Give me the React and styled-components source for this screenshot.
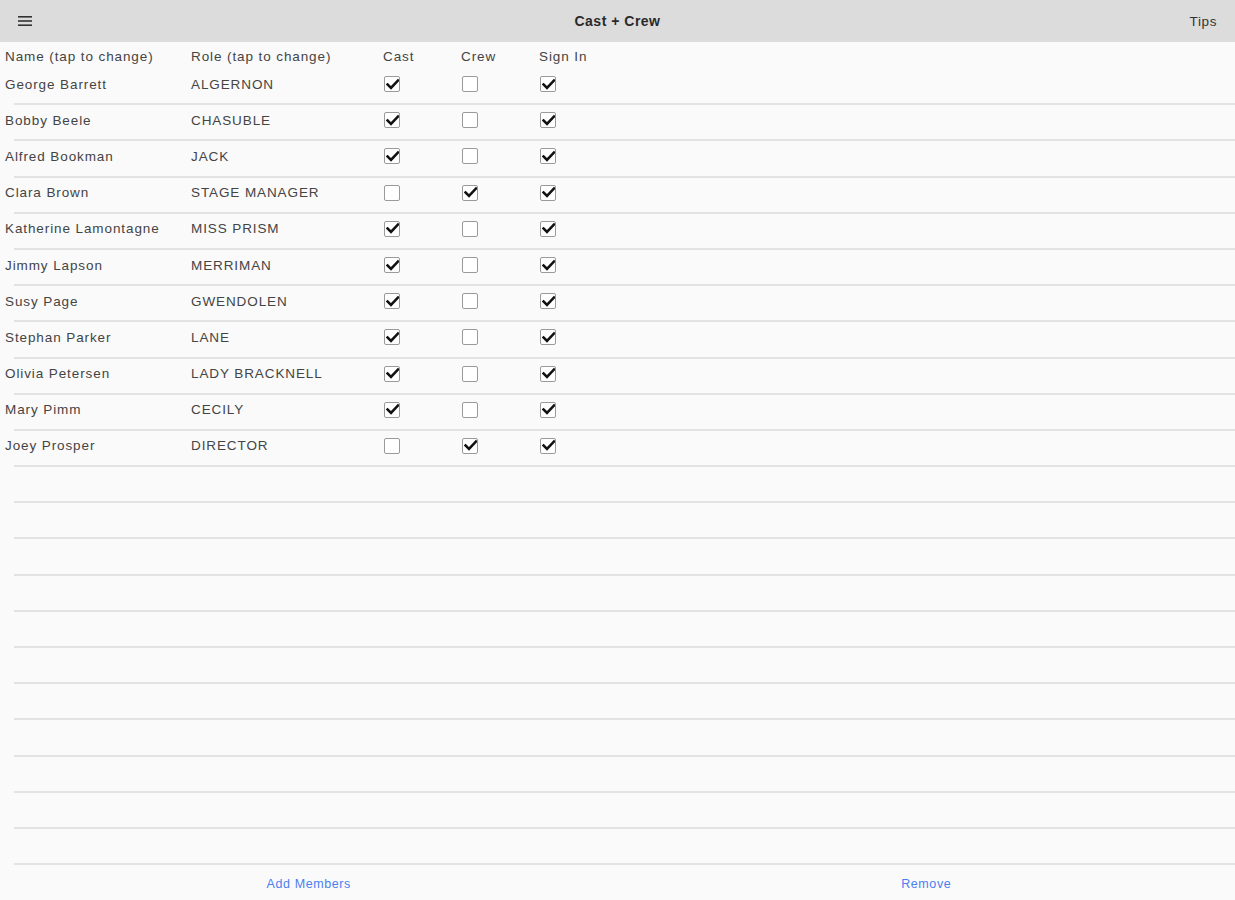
import styled, { createGlobalStyle } from 'styled-components';

const GlobalStyle = createGlobalStyle`
	html, body {
		margin: 0;
		padding: 0;
		background: #fafafa;
	}
	body {
		font-family: 'Liberation Sans', Arial, sans-serif;
		color: #404040;
	}
`;

const members = [
	{ name: 'George Barrett', role: 'ALGERNON', cast: true, crew: false, signIn: true },
	{ name: 'Bobby Beele', role: 'CHASUBLE', cast: true, crew: false, signIn: true },
	{ name: 'Alfred Bookman', role: 'JACK', cast: true, crew: false, signIn: true },
	{ name: 'Clara Brown', role: 'STAGE MANAGER', cast: false, crew: true, signIn: true },
	{ name: 'Katherine Lamontagne', role: 'MISS PRISM', cast: true, crew: false, signIn: true },
	{ name: 'Jimmy Lapson', role: 'MERRIMAN', cast: true, crew: false, signIn: true },
	{ name: 'Susy Page', role: 'GWENDOLEN', cast: true, crew: false, signIn: true },
	{ name: 'Stephan Parker', role: 'LANE', cast: true, crew: false, signIn: true },
	{ name: 'Olivia Petersen', role: 'LADY BRACKNELL', cast: true, crew: false, signIn: true },
	{ name: 'Mary Pimm', role: 'CECILY', cast: true, crew: false, signIn: true },
	{ name: 'Joey Prosper', role: 'DIRECTOR', cast: false, crew: true, signIn: true },
];

const EMPTY_ROWS = 11;

const Page = styled.div`
	display: flex;
	flex-direction: column;
	height: 100vh;
	width: 1235px;
	background: #fafafa;
`;

const NavBar = styled.header`
	height: 42px;
	flex: 0 0 42px;
	display: grid;
	grid-template-columns: 1fr auto 1fr;
	align-items: center;
	background: #dcdcdc;
	padding: 0 18px;
	box-sizing: border-box;
`;

const MenuButton = styled.div`
	display: flex;
	align-items: center;
	color: #333;
`;

const Title = styled.div`
	font-size: 14px;
	font-weight: 700;
	letter-spacing: 0.5px;
	color: #2a2a2a;
`;

const NavAction = styled.div`
	justify-self: end;
	font-size: 13.5px;
	letter-spacing: 0.6px;
	color: #333;
`;

const Table = styled.div`
	display: flex;
	flex-direction: column;
`;

const cols = '186px 192px 78px 78px 1fr';

const HeaderRow = styled.div`
	display: grid;
	grid-template-columns: ${cols};
	align-items: center;
	height: 27px;
	padding-left: 5px;
	padding-top: 1px;
	box-sizing: border-box;
	font-size: 13.5px;
	letter-spacing: 0.9px;
	color: #444;
`;

const Row = styled.div`
	position: relative;
	display: grid;
	grid-template-columns: ${cols};
	align-items: center;
	height: 36.2px;
	padding-left: 5px;
	padding-bottom: 6px;
	box-sizing: border-box;
	font-size: 13.5px;
	letter-spacing: 0.9px;
	color: #444;

	&::after {
		content: '';
		position: absolute;
		left: 14px;
		right: 0;
		bottom: 0;
		height: 2px;
		background: #e3e3e3;
	}
`;

const Cell = styled.div`
	display: flex;
	align-items: center;
	white-space: nowrap;
`;

const Box = styled.span`
	display: inline-flex;
	align-items: center;
	justify-content: center;
	width: 16px;
	height: 16px;
	box-sizing: border-box;
	border: 1.5px solid #9a9a9a;
	border-radius: 2px;
	background: #fff;
	margin-left: 1px;
`;

const Footer = styled.div`
	flex: 1;
	display: grid;
	grid-template-columns: 1fr 1fr;
	align-items: center;
	padding-top: 3px;
`;

const FooterLink = styled.div`
	text-align: center;
	font-size: 12.5px;
	letter-spacing: 0.6px;
	color: #4a7ff0;
`;

const Checkbox = ({ checked }) => (
	<Box>
		{checked && (
			<svg width='13' height='13' viewBox='0 0 13 13'>
				<path
					d='M1.5 6.5 L5 10 L12 2.5'
					fill='none'
					stroke='#111'
					strokeWidth='2.6'
					strokeLinecap='square'
				/>
			</svg>
		)}
	</Box>
);

const MenuIcon = () => (
	<svg width='14' height='12' viewBox='0 0 14 12'>
		<rect x='0' y='1' width='14' height='1.6' fill='#333' />
		<rect x='0' y='5.2' width='14' height='1.6' fill='#333' />
		<rect x='0' y='9.4' width='14' height='1.6' fill='#333' />
	</svg>
);

export default function App() {
	return (
		<>
			<GlobalStyle />
			<Page>
				<NavBar>
					<MenuButton>
						<MenuIcon />
					</MenuButton>
					<Title>Cast + Crew</Title>
					<NavAction>Tips</NavAction>
				</NavBar>
				<Table>
					<HeaderRow>
						<Cell>Name (tap to change)</Cell>
						<Cell>Role (tap to change)</Cell>
						<Cell>Cast</Cell>
						<Cell>Crew</Cell>
						<Cell>Sign In</Cell>
					</HeaderRow>
					{members.map(m => (
						<Row key={m.name}>
							<Cell>{m.name}</Cell>
							<Cell>{m.role}</Cell>
							<Cell>
								<Checkbox checked={m.cast} />
							</Cell>
							<Cell>
								<Checkbox checked={m.crew} />
							</Cell>
							<Cell>
								<Checkbox checked={m.signIn} />
							</Cell>
						</Row>
					))}
					{Array.from({ length: EMPTY_ROWS }, (_, i) => (
						<Row key={`empty-${i}`} />
					))}
				</Table>
				<Footer>
					<FooterLink>Add Members</FooterLink>
					<FooterLink>Remove</FooterLink>
				</Footer>
			</Page>
		</>
	);
}
